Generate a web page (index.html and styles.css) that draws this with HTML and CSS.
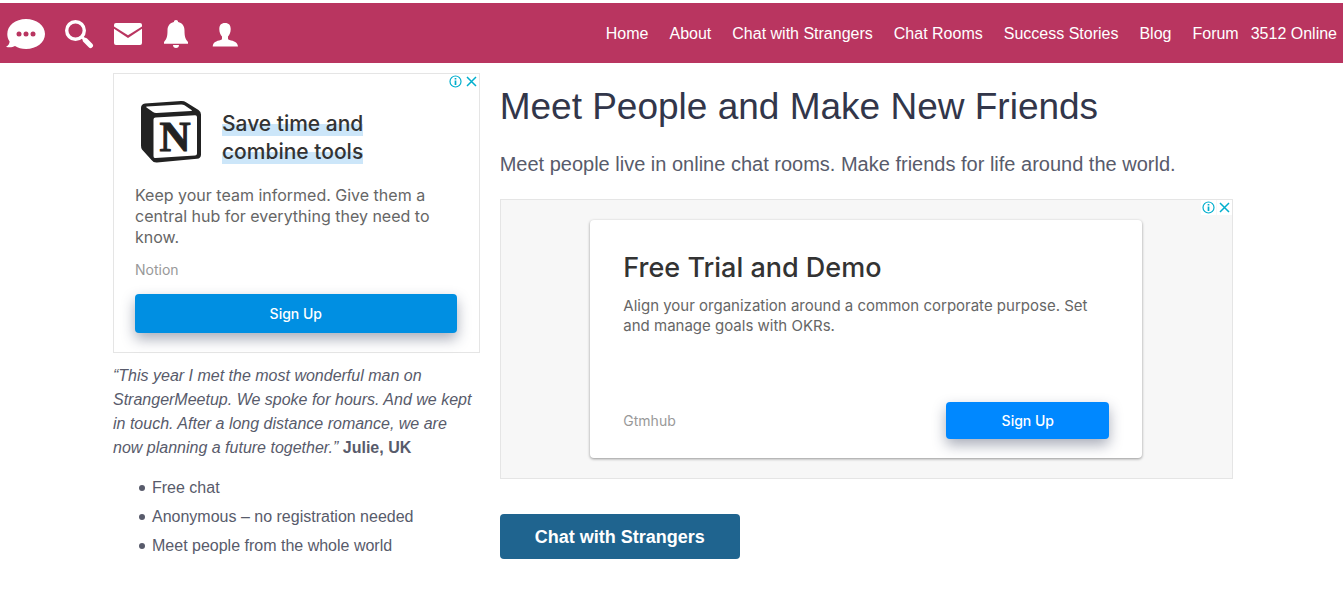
FILE: index.html
```html
<!DOCTYPE html>
<html lang="en">
<head>
  <meta charset="UTF-8">
  <meta name="viewport" content="width=device-width, initial-scale=1.0">
  <title>StrangerMeetup</title>
  <link rel="stylesheet" href="styles.css">
</head>
<body>
  <header class="topbar">
    <div class="icons">
      <a href="#" aria-label="Chat">
        <svg width="39" height="32" viewBox="0 0 39 32">
          <path fill="#fff" d="M20 1C30.500 1 39 7.500 39 16s-8.500 15-19 15c-4.500 0-8-1-11-3-2.500 1.300-6 1.700-9 .7 2.500-1.200 3.500-3.200 3.600-5.200C2 21.300 1.300 18.600 1.300 16 1.300 7.500 9.500 1 20 1z"/>
          <g fill="#b93560"><circle cx="13" cy="16" r="2.500"/><circle cx="20" cy="16" r="2.500"/><circle cx="27" cy="16" r="2.500"/></g>
        </svg>
      </a>
      <a href="#" aria-label="Search">
        <svg width="29" height="32" viewBox="0 0 29 32">
          <circle cx="10.500" cy="12.500" r="8.800" fill="none" stroke="#fff" stroke-width="3.400"/>
          <path d="M16.500 18.500l3 3" stroke="#fff" stroke-width="3"/>
          <path d="M20.300 22.300l5.200 5.200" stroke="#fff" stroke-width="5" stroke-linecap="round"/>
        </svg>
      </a>
      <a href="#" aria-label="Messages">
        <svg width="28" height="32" viewBox="0 0 28 32">
          <path fill="#fff" d="M2 5h24a2 2 0 0 1 2 2v1.500L14 17.300 0 8.500V7a2 2 0 0 1 2-2z"/>
          <path fill="#fff" d="M0 10.800l14 9.200 14-9.200V25a2 2 0 0 1-2 2H2a2 2 0 0 1-2-2z"/>
        </svg>
      </a>
      <a href="#" aria-label="Notifications">
        <svg width="28" height="32" viewBox="0 0 28 32">
          <path fill="#fff" d="M14 2c1.300 0 2.100.9 2.100 2 3.900.9 6.400 3.800 6.400 8.500 0 5.500.7 8.500 3.500 11.500v1.700H2V24c2.800-3 3.500-6 3.500-11.500 0-4.700 2.500-7.600 6.400-8.500 0-1.100.8-2 2.100-2z"/>
          <path fill="#fff" d="M11 27h6c0 1.800-1.200 3-3 3s-3-1.200-3-3z"/>
        </svg>
      </a>
      <a href="#" aria-label="Profile">
        <svg width="28" height="32" viewBox="0 0 28 32">
          <path fill="#fff" d="M15 5c4 0 5.700 2.300 5.700 6 0 3.500-1.300 6-2.700 7.500v2c0 .8.500 1.200 1.500 1.500 4.500 1 8 2.300 8.500 6.500H2.700c.3-4.200 3.500-5.500 8-6.500 1-.3 1.300-.7 1.300-1.500v-2C10.600 17 9.300 14.500 9.300 11c0-3.700 1.700-6 5.700-6z"/>
        </svg>
      </a>
    </div>
    <nav class="menu">
      <a href="#">Home</a>
      <a href="#">About</a>
      <a href="#">Chat with Strangers</a>
      <a href="#">Chat Rooms</a>
      <a href="#">Success Stories</a>
      <a href="#">Blog</a>
      <a href="#">Forum</a>
    </nav>
    <span class="online">3512 Online</span>
  </header>

  <main class="container">
    <aside class="sidebar">
      <div class="ad ad-notion">
        <div class="ad-marks">
          <svg width="15" height="15" viewBox="0 0 15 15" fill="none" stroke="#00aecd">
            <circle cx="7.500" cy="7.500" r="5.500" stroke-width="1.200"/>
            <path d="M7.500 6.500v4.500M7.500 4v1.500" stroke-width="1.700"/>
          </svg>
          <svg width="15" height="15" viewBox="0 0 15 15" fill="none" stroke="#00aecd">
            <path d="M3 3l9 9M12 3l-9 9" stroke-width="1.500"/>
          </svg>
        </div>
        <div class="ad-top">
          <svg class="notion-logo" width="62" height="64" viewBox="0 0 62 64">
            <path fill="#222" d="M5 3.500L41 1q3-.2 5 1.200L58.500 10q2.500 1.700 2.500 4.500v40q0 4-4 4.300L17 62.500q-3.500.3-5.500-2.500L2 49.500Q1 48 1 45.500V8q0-4 4-4.500z"/>
            <path fill="#fff" d="M6.500 7.500q-1-.8.500-1L41 4.500q2-.1 3.500.8l7 4.700q1.300.9-.5 1L16.500 13q-2 .1-3.500-1z"/>
            <path fill="#fff" d="M15.500 17.500l39.500-2.300q2-.1 2 1.800v36.500q0 2-2 2.100l-39.500 2.500q-2 .1-2-1.900V19.500q0-1.900 2-2z"/>
            <text x="35" y="51" text-anchor="middle" font-family="Liberation Serif, serif" font-weight="bold" font-size="43" fill="#222" stroke="#222">N</text>
          </svg>
          <h2 class="notion-title"><span>Save time and<br>combine tools</span></h2>
        </div>
        <p class="notion-text">Keep your team informed. Give them a central hub for everything they need to know.</p>
        <p class="advertiser">Notion</p>
        <button class="signup" type="button">Sign Up</button>
      </div>

      <p class="quote"><em>“This year I met the most wonderful man on StrangerMeetup. We spoke for hours. And we kept in touch. After a long distance romance, we are now planning a future together.”</em> <strong>Julie, UK</strong></p>
      <ul class="features">
        <li>Free chat</li>
        <li>Anonymous – no registration needed</li>
        <li>Meet people from the whole world</li>
      </ul>
    </aside>

    <section class="main">
      <h1>Meet People and Make New Friends</h1>
      <p class="intro">Meet people live in online chat rooms. Make friends for life around the world.</p>
      <div class="ad ad-wide">
        <div class="ad-marks">
          <svg width="15" height="15" viewBox="0 0 15 15" fill="none" stroke="#00aecd">
            <circle cx="7.500" cy="7.500" r="5.500" stroke-width="1.200"/>
            <path d="M7.500 6.500v4.500M7.500 4v1.500" stroke-width="1.700"/>
          </svg>
          <svg width="15" height="15" viewBox="0 0 15 15" fill="none" stroke="#00aecd">
            <path d="M3 3l9 9M12 3l-9 9" stroke-width="1.500"/>
          </svg>
        </div>
        <div class="card">
          <h2 class="card-title">Free Trial and Demo</h2>
          <p class="card-text">Align your organization around a common corporate purpose. Set and manage goals with OKRs.</p>
          <div class="card-footer">
            <span class="advertiser">Gtmhub</span>
            <button class="signup" type="button">Sign Up</button>
          </div>
        </div>
      </div>
      <button class="chat-button" type="button">Chat with Strangers</button>
    </section>
  </main>
</body>
</html>
```
FILE: styles.css
```css
* {
  box-sizing: border-box;
}

body {
  margin: 0;
  padding-top: 3px;
  background: #fff;
  color: #585b6b;
  font-family: "Liberation Sans", Arial, sans-serif;
  font-size: 16px;
  line-height: 24px;
}

h1, h2, p, ul {
  margin: 0;
}

/* Header */
.topbar {
  display: flex;
  align-items: center;
  height: 60px;
  padding: 2px 6px 0;
  background: #b93560;
  color: #fff;
}

.topbar a {
  color: #fff;
  text-decoration: none;
}

.icons {
  display: flex;
  gap: 20px;
}

.icons svg {
  display: block;
}

.menu {
  display: flex;
  gap: 21px;
  margin-left: auto;
}

.online {
  margin-left: 12px;
}

/* Page columns */
.container {
  display: grid;
  grid-template-columns: 1fr 2fr;
  gap: 20px;
  max-width: 1123px;
  margin: 0 auto;
  padding: 10px 0 0 3px;
}

/* Ads */
.ad {
  position: relative;
  height: 280px;
  border: 1px solid #e5e5e5;
  font-family: Inter, sans-serif;
}

.ad-marks {
  position: absolute;
  top: 0;
  right: 0;
  display: flex;
  gap: 1px;
}

.ad-marks svg {
  background: #fff;
}

.ad-notion {
  padding: 26px 22px 0 21px;
}

.ad-top {
  display: flex;
  gap: 20px;
  padding-left: 5px;
}

.notion-title {
  padding-top: 10px;
  color: #333;
  font-size: 21px;
  font-weight: 500;
  line-height: 28px;
}

.notion-title span {
  background: linear-gradient(transparent 50%, #cce6f9 50%);
  box-decoration-break: clone;
  -webkit-box-decoration-break: clone;
}

.notion-text {
  margin-top: 19px;
  color: #666;
  font-size: 16px;
  line-height: 21px;
}

.advertiser {
  color: #999;
  font-size: 14px;
  line-height: 20px;
}

.ad-notion .advertiser {
  margin-top: 12px;
}

.signup {
  height: 37px;
  border: none;
  border-radius: 4px;
  background: #0088ff;
  box-shadow: 0 6px 14px rgba(40, 50, 80, 0.4);
  color: #fff;
  font-family: Inter, sans-serif;
  font-size: 14px;
  font-weight: 500;
  cursor: pointer;
}

.ad-notion .signup {
  width: 100%;
  height: 39px;
  margin-top: 14px;
  background: #008fe2;
}

.ad-wide {
  padding: 20px;
  background: #f7f7f7;
}

.card {
  display: flex;
  flex-direction: column;
  max-width: 552px;
  height: 238px;
  margin: 0 auto;
  padding: 32px 33px 19px;
  border-radius: 4px;
  background: #fff;
  box-shadow: 0 1px 3px rgba(0, 0, 0, 0.4);
}

.card-title {
  color: #333;
  font-size: 27px;
  font-weight: 500;
  line-height: 32px;
}

.card-text {
  margin-top: 12px;
  color: #666;
  font-size: 15px;
  line-height: 20px;
}

.card-footer {
  display: flex;
  align-items: center;
  justify-content: space-between;
  margin-top: auto;
}

.card .signup {
  width: 163px;
}

/* Left column text */
.quote {
  margin-top: 11px;
}

.features {
  margin-top: 16px;
  padding-left: 26px;
  list-style: none;
}

.features li {
  display: flex;
  align-items: center;
  gap: 7px;
  margin-bottom: 5px;
}

.features li::before {
  content: "";
  width: 6px;
  height: 6px;
  border-radius: 50%;
  background: #585b6b;
}

/* Right column */
h1 {
  padding-top: 9px;
  color: #32364a;
  font-size: 37px;
  font-weight: 400;
  line-height: 50px;
}

.intro {
  margin: 17px 0 20px;
  font-size: 20px;
  line-height: 30px;
}

.chat-button {
  margin-top: 35px;
  padding: 2px 35px 0;
  height: 45px;
  border: none;
  border-radius: 4px;
  background: #1f648f;
  color: #fff;
  font-family: "Liberation Sans", Arial, sans-serif;
  font-size: 18px;
  font-weight: 700;
  cursor: pointer;
}
```
